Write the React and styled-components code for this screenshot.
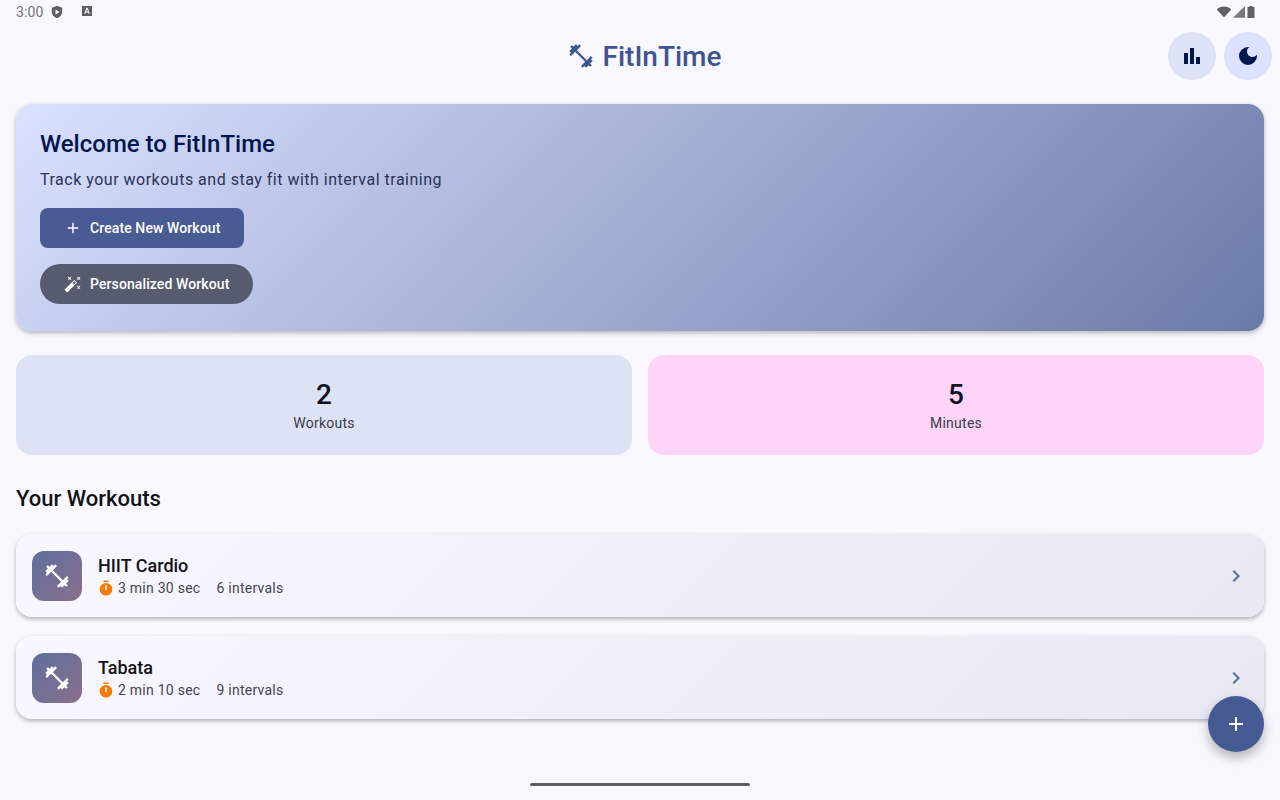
import React from "react"
import styled, { createGlobalStyle } from "styled-components"
import {
  MdAdd,
  MdAutoFixHigh,
  MdBarChart,
  MdChevronRight,
  MdDarkMode,
  MdFitnessCenter,
} from "react-icons/md"

const GlobalStyle = createGlobalStyle`
  html, body {
    margin: 0;
    padding: 0;
    background: #faf8ff;
  }
  body {
    font-family: Roboto, "Liberation Sans", sans-serif;
    -webkit-font-smoothing: antialiased;
  }
`

const Screen = styled.div`
  position: relative;
  width: 1280px;
  height: 800px;
  overflow: hidden;
  background: #faf8ff;
`

const StatusBar = styled.div`
  display: flex;
  align-items: center;
  justify-content: space-between;
  height: 24px;
  padding: 0 24px 0 16px;
  color: #6f7076;
  font-size: 14px;
`

const StatusGroup = styled.div`
  display: flex;
  align-items: center;
  gap: ${(p) => p.$gap || 0}px;
`

const StatusTime = styled.span`
  margin-right: 7px;
  letter-spacing: 0.1px;
`

const AppBar = styled.header`
  display: grid;
  grid-template-columns: 1fr auto 1fr;
  align-items: center;
  height: 48px;
  padding: 8px 8px 8px 16px;
`

const Brand = styled.div`
  grid-column: 2;
  display: flex;
  align-items: center;
  gap: 8px;
  color: #3f5490;
  font-size: 28px;
  font-weight: 500;
  svg {
    font-size: 28px;
  }
`

const AppActions = styled.div`
  grid-column: 3;
  display: flex;
  justify-content: flex-end;
  gap: 8px;
`

const RoundButton = styled.button`
  display: flex;
  align-items: center;
  justify-content: center;
  width: 48px;
  height: 48px;
  padding: 0;
  border: none;
  border-radius: 50%;
  color: #00164e;
  background: ${(p) => p.$bg};
  svg {
    font-size: 24px;
  }
`

const Main = styled.main`
  display: flex;
  flex-direction: column;
  padding: 16px 16px 0;
`

const Hero = styled.section`
  display: flex;
  flex-direction: column;
  align-items: flex-start;
  height: 227px;
  box-sizing: border-box;
  padding: 24px;
  border-radius: 16px;
  background: linear-gradient(135deg, #dbe1ff 0%, #6a7aa7 100%);
  box-shadow: 0 2px 5px rgba(0, 0, 0, 0.28);
`

const HeroTitle = styled.h1`
  margin: 0;
  color: #00164e;
  font-size: 24px;
  line-height: 32px;
  font-weight: 500;
`

const HeroText = styled.p`
  margin: 8px 0 0;
  color: #2b3358;
  font-size: 16px;
  line-height: 24px;
  letter-spacing: 0.5px;
`

const ActionButton = styled.button`
  display: flex;
  align-items: center;
  gap: 8px;
  height: 40px;
  margin-top: ${(p) => p.$top}px;
  padding: 0 24px;
  border: none;
  border-radius: ${(p) => p.$radius}px;
  color: #fff;
  background: ${(p) => p.$bg};
  font-family: inherit;
  font-size: 14px;
  font-weight: 500;
  letter-spacing: 0.1px;
  svg {
    font-size: 18px;
  }
`

const StatsRow = styled.section`
  display: grid;
  grid-template-columns: 1fr 1fr;
  gap: 16px;
  margin-top: 24px;
`

const StatCard = styled.div`
  display: flex;
  flex-direction: column;
  align-items: center;
  justify-content: center;
  height: 100px;
  border-radius: 16px;
  background: ${(p) => p.$bg};
`

const StatValue = styled.div`
  color: #101323;
  font-size: 28px;
  line-height: 36px;
  font-weight: 500;
`

const StatLabel = styled.div`
  color: #3a3c4c;
  font-size: 14px;
  line-height: 20px;
  letter-spacing: 0.25px;
`

const SectionTitle = styled.h2`
  margin: 30px 0 0;
  color: #111318;
  font-size: 22px;
  line-height: 28px;
  font-weight: 500;
`

const WorkoutList = styled.div`
  display: flex;
  flex-direction: column;
  gap: 19px;
  margin-top: 21px;
`

const WorkoutCard = styled.article`
  display: flex;
  align-items: center;
  gap: 16px;
  height: 83px;
  box-sizing: border-box;
  padding: 0 16px;
  border-radius: 16px;
  background: linear-gradient(135deg, #f9f7ff 0%, #e7e8f2 100%);
  box-shadow: 0 2px 4px rgba(0, 0, 0, 0.3);
`

const WorkoutIcon = styled.div`
  display: flex;
  align-items: center;
  justify-content: center;
  width: 50px;
  height: 50px;
  border-radius: 12px;
  color: #fff;
  background: linear-gradient(135deg, #5f6f9f 0%, #896f8b 100%);
  svg {
    font-size: 28px;
  }
`

const WorkoutBody = styled.div`
  flex: 1;
`

const WorkoutName = styled.div`
  color: #111318;
  font-size: 18px;
  line-height: 24px;
  font-weight: 500;
`

const WorkoutMeta = styled.div`
  display: flex;
  align-items: center;
  color: #44464f;
  font-size: 14px;
  line-height: 20px;
  letter-spacing: 0.25px;
`

const TimerIcon = styled.svg`
  width: 16px;
  height: 16px;
  margin-right: 4px;
`

const Intervals = styled.span`
  margin-left: 16px;
`

const Chevron = styled.div`
  display: flex;
  color: #5a6c9e;
  svg {
    font-size: 24px;
  }
`

const Fab = styled.button`
  position: absolute;
  right: 16px;
  bottom: 48px;
  display: flex;
  align-items: center;
  justify-content: center;
  width: 56px;
  height: 56px;
  padding: 0;
  border: none;
  border-radius: 50%;
  color: #fff;
  background: #455a92;
  box-shadow: 0 6px 12px rgba(0, 0, 0, 0.28);
  svg {
    font-size: 24px;
  }
`

const HomeIndicator = styled.div`
  position: absolute;
  left: 530px;
  bottom: 14px;
  width: 220px;
  height: 3px;
  border-radius: 2px;
  background: #5d5e62;
`

const ShieldIcon = () => (
  <svg width="14" height="14" viewBox="0 0 14 14">
    <path fill="#5f6065" d="M7 .8 12.2 2.7v4c0 3.1-2.2 5.6-5.2 6.5C4 12.3 1.8 9.800 1.8 6.700v-4z" />
    <path fill="#faf8ff" d="M5.500 4.600 9.600 7l-4.100 2.400z" />
  </svg>
)

const AccessIcon = () => (
  <svg width="14" height="14" viewBox="0 0 14 14">
    <rect x="2" y="2" width="10" height="10" fill="#5f6065" />
    <path fill="#faf8ff" d="M6.300 3.800h1.400l2 6h-1.200l-.4-1.300H5.900l-.4 1.300H4.300zm-.1 3.700h1.600L7 5.100z" />
  </svg>
)

const WifiIcon = () => (
  <svg width="16" height="14" viewBox="0 0 16 14">
    <path fill="#5f6065" d="M.8 4.400C2.800 2.600 5.300 1.600 8 1.600s5.200 1 7.200 2.800L8 12.600z" />
  </svg>
)

const SignalIcon = () => (
  <svg width="14" height="14" viewBox="0 0 14 14">
    <path fill="#77787c" d="M13 1v11.800H1z" />
  </svg>
)

const BatteryIcon = () => (
  <svg width="10" height="14" viewBox="0 0 10 14">
    <path fill="#5f6065" d="M3.500 1h3v1H8.500v11h-7V2h2z" />
  </svg>
)

const TimerFilled = () => (
  <TimerIcon viewBox="0 0 16 16">
    <rect x="5.500" y="0.500" width="5" height="1.500" fill="#f57c00" />
    <circle cx="8" cy="9.200" r="6.300" fill="#f57c00" />
    <rect x="7.200" y="5.200" width="1.600" height="4.800" fill="#fff" />
  </TimerIcon>
)

const workouts = [
  { name: "HIIT Cardio", duration: "3 min 30 sec", intervals: "6 intervals" },
  { name: "Tabata", duration: "2 min 10 sec", intervals: "9 intervals" },
]

const App = () => (
  <Screen>
    <GlobalStyle />
    <StatusBar>
      <StatusGroup $gap={0}>
        <StatusTime>3:00</StatusTime>
        <ShieldIcon />
        <StatusGroup $gap={0} style={undefined}>
          <Intervals>
            <AccessIcon />
          </Intervals>
        </StatusGroup>
      </StatusGroup>
      <StatusGroup $gap={0}>
        <WifiIcon />
        <SignalIcon />
        <BatteryIcon />
      </StatusGroup>
    </StatusBar>
    <AppBar>
      <Brand>
        <MdFitnessCenter />
        FitInTime
      </Brand>
      <AppActions>
        <RoundButton $bg="#dee2f5">
          <MdBarChart />
        </RoundButton>
        <RoundButton $bg="#dbe1ff">
          <MdDarkMode />
        </RoundButton>
      </AppActions>
    </AppBar>
    <Main>
      <Hero>
        <HeroTitle>Welcome to FitInTime</HeroTitle>
        <HeroText>Track your workouts and stay fit with interval training</HeroText>
        <ActionButton $top={16} $radius={8} $bg="#485b93">
          <MdAdd />
          Create New Workout
        </ActionButton>
        <ActionButton $top={16} $radius={20} $bg="#575b6e">
          <MdAutoFixHigh />
          Personalized Workout
        </ActionButton>
      </Hero>
      <StatsRow>
        <StatCard $bg="#dee2f5">
          <StatValue>2</StatValue>
          <StatLabel>Workouts</StatLabel>
        </StatCard>
        <StatCard $bg="#fed5f9">
          <StatValue>5</StatValue>
          <StatLabel>Minutes</StatLabel>
        </StatCard>
      </StatsRow>
      <SectionTitle>Your Workouts</SectionTitle>
      <WorkoutList>
        {workouts.map((workout) => (
          <WorkoutCard key={workout.name}>
            <WorkoutIcon>
              <MdFitnessCenter />
            </WorkoutIcon>
            <WorkoutBody>
              <WorkoutName>{workout.name}</WorkoutName>
              <WorkoutMeta>
                <TimerFilled />
                {workout.duration}
                <Intervals>{workout.intervals}</Intervals>
              </WorkoutMeta>
            </WorkoutBody>
            <Chevron>
              <MdChevronRight />
            </Chevron>
          </WorkoutCard>
        ))}
      </WorkoutList>
    </Main>
    <Fab>
      <MdAdd />
    </Fab>
    <HomeIndicator />
  </Screen>
)

export default App
